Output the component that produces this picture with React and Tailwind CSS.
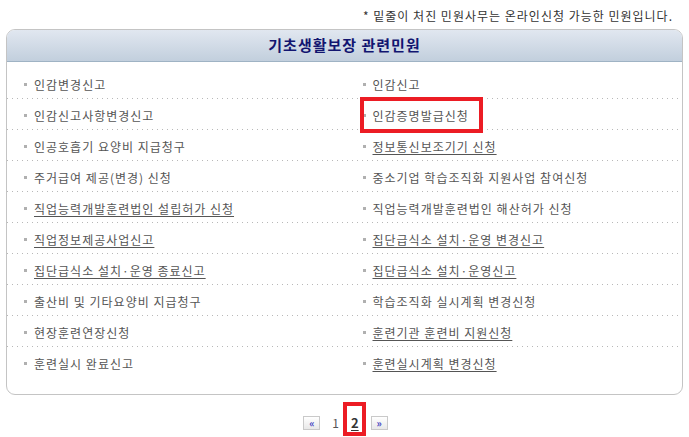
const rows = [
  [
    { label: "인감변경신고" },
    { label: "인감신고" },
  ],
  [
    { label: "인감신고사항변경신고" },
    { label: "인감증명발급신청", marked: true },
  ],
  [
    { label: "인공호흡기 요양비 지급청구" },
    { label: "정보통신보조기기 신청", online: true },
  ],
  [
    { label: "주거급여 제공(변경) 신청" },
    { label: "중소기업 학습조직화 지원사업 참여신청" },
  ],
  [
    { label: "직업능력개발훈련법인 설립허가 신청", online: true },
    { label: "직업능력개발훈련법인 해산허가 신청" },
  ],
  [
    { label: "직업정보제공사업신고", online: true },
    { label: "집단급식소 설치·운영 변경신고", online: true },
  ],
  [
    { label: "집단급식소 설치·운영 종료신고", online: true },
    { label: "집단급식소 설치·운영신고", online: true },
  ],
  [
    { label: "출산비 및 기타요양비 지급청구" },
    { label: "학습조직화 실시계획 변경신청" },
  ],
  [
    { label: "현장훈련연장신청" },
    { label: "훈련기관 훈련비 지원신청", online: true },
  ],
  [
    { label: "훈련실시 완료신고" },
    { label: "훈련실시계획 변경신청", online: true },
  ],
];

function Cell({ item, right = false }) {
  return (
    <div
      className={[
        "relative flex items-center gap-[7px]",
        right ? "pl-[18px]" : "pl-[17px]",
      ].join(" ")}
    >
      <span className="h-[3px] w-[3px] shrink-0 bg-[#b0b0b0]" />
      <span
        className={[
          "whitespace-nowrap text-[12px] tracking-[1px] text-[#555]",
          item.online ? "underline underline-offset-2" : "",
        ].join(" ")}
      >
        {item.label}
      </span>
      {/* highlight box drawn over the item */}
      {item.marked && (
        <div className="pointer-events-none absolute left-[15px] top-[-5px] h-[36px] w-[123px] border-4 border-[#ec1c24]" />
      )}
    </div>
  );
}

function PageBtn({ children }) {
  return (
    <span className="flex h-[14px] w-[17px] items-center justify-center border border-[#c9c9c9] bg-[linear-gradient(180deg,#ffffff,#e8e8e8)] text-[10px] font-bold leading-none text-[#3d3dc0]">
      {children}
    </span>
  );
}

export default function App() {
  return (
    <div
      className="h-[437px] w-[689px] bg-white"
      style={{ fontFamily: '"Noto Sans CJK KR", "Noto Sans", sans-serif' }}
    >
      <div className="flex h-[29px] items-start justify-end pr-[16px] pt-[8px] text-[12px] leading-[16px] tracking-[1px] text-[#333]">
        * 밑줄이 처진 민원사무는 온라인신청 가능한 민원입니다.
      </div>

      <div className="mx-[6px] overflow-hidden rounded-[9px] border border-[#c4c4c4]">
        <div className="flex h-[32px] items-center justify-center border-b border-[#9fb3c4] bg-[linear-gradient(180deg,#e1e7f0,#c2cfdd)]">
          <span className="text-[15px] font-bold tracking-[1px] text-[#121570]">기초생활보장 관련민원</span>
        </div>

        <div className="pb-[16px] pt-[6px]">
          {rows.map((r, i) => (
            <div
              key={i}
              className={[
                "grid h-[31px] grid-cols-2 pb-[1px] pt-[3px]",
                i < rows.length - 1
                  ? "bg-[linear-gradient(90deg,#b8b8b8_1px,transparent_1px)] bg-[length:5px_1px] bg-bottom bg-repeat-x"
                  : "",
              ].join(" ")}
            >
              <Cell item={r[0]} />
              <Cell item={r[1]} right />
            </div>
          ))}
        </div>
      </div>

      <div className="mt-[18px] flex items-center justify-center gap-[12px] pl-[2px]">
        <PageBtn>«</PageBtn>
        <span className="text-[12px] text-[#555]">1</span>
        <span className="relative text-[13px] font-semibold text-[#333] underline underline-offset-2">
          2
          <span className="pointer-events-none absolute left-[-8px] top-[-11px] h-[34px] w-[23px] border-4 border-[#ec1c24]" />
        </span>
        <PageBtn>»</PageBtn>
      </div>
    </div>
  );
}
